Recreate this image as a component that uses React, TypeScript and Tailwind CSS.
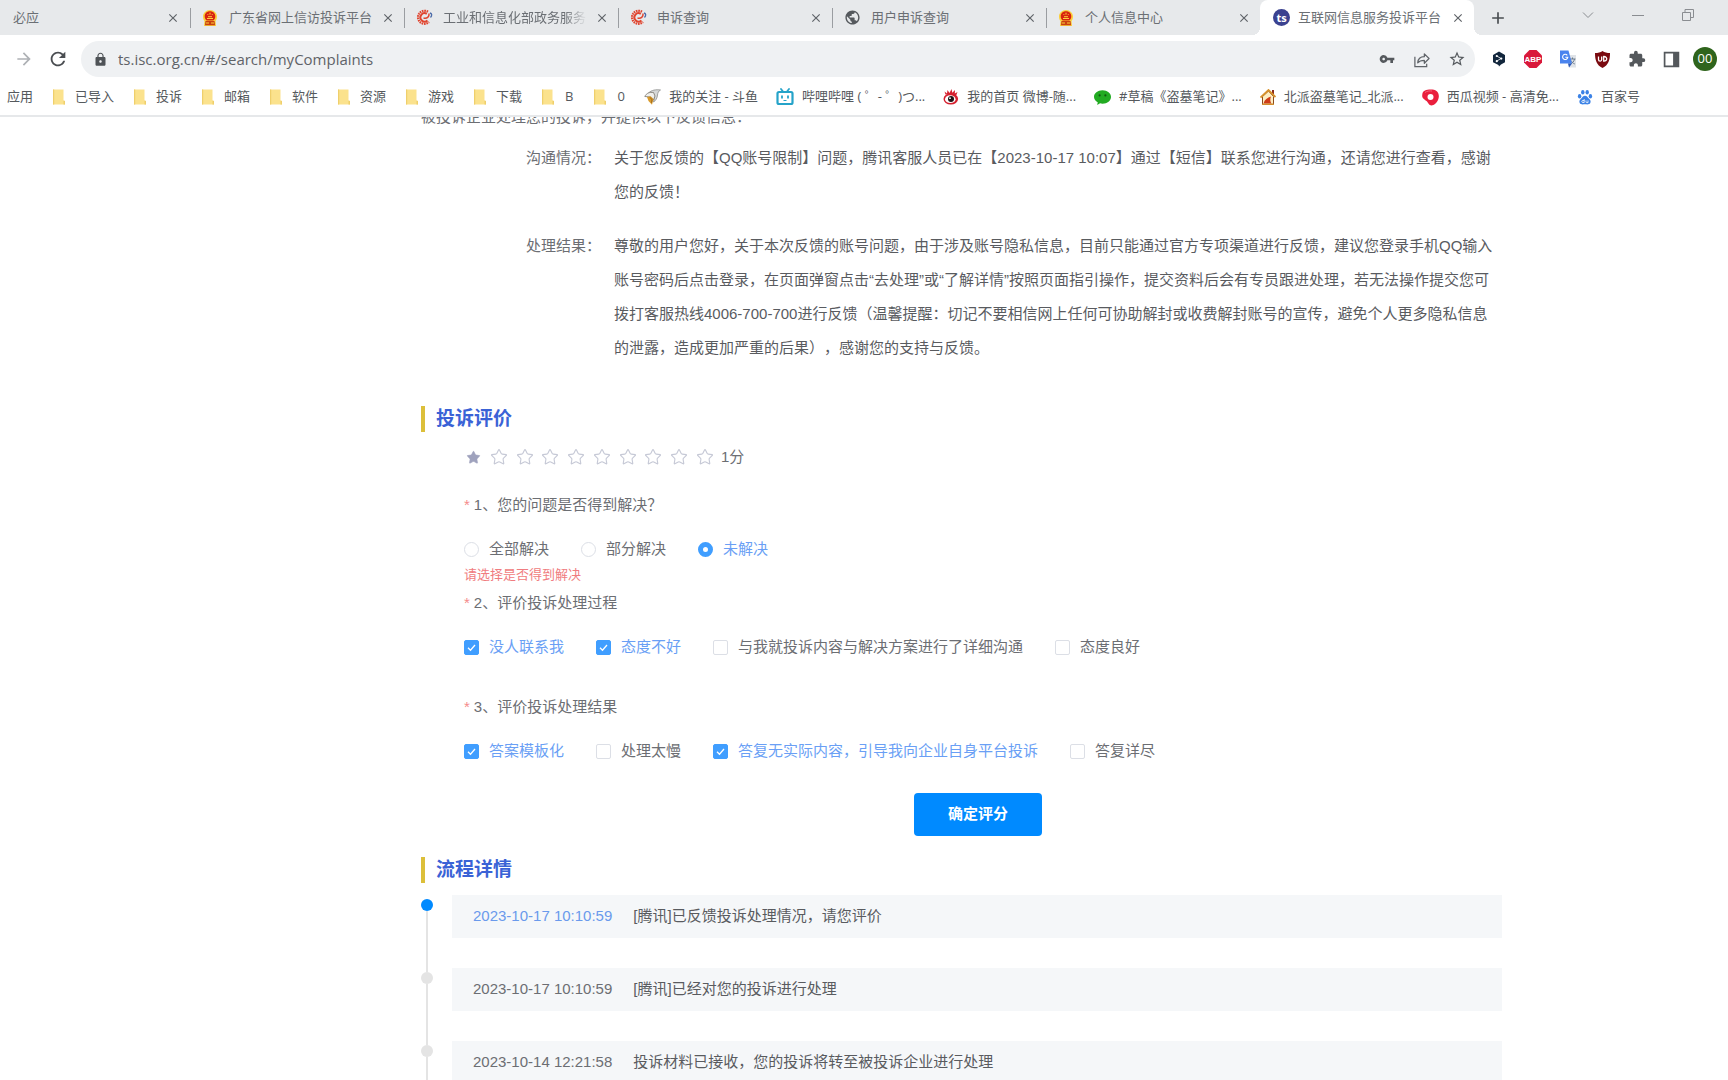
import React, { useState } from 'react';
import { Star } from 'lucide-react';
import {
  MdAdd,
  MdArrowForward,
  MdClose,
  MdExtension,
  MdLock,
  MdPublic,
  MdRefresh,
  MdStarBorder,
  MdVpnKey,
} from 'react-icons/md';

const EmblemIcon = () => (
  <svg className="size-4" viewBox="0 0 16 16">
    <path d="M8 0c4 0 7 3 7 6.500 0 2-.7 3.500-1.500 4.500l.5 5H2l.5-5C1.700 10 1 8.500 1 6.500 1 3 4 0 8 0z" fill="#fbcf3a" />
    <path d="M8 1.300c3.200 0 5.300 2.200 5.300 5 0 2-.8 3.400-2 4.200H4.700c-1.200-.8-2-2.200-2-4.200 0-2.800 2.100-5 5.300-5z" fill="#d8230f" />
    <path d="M3.500 11h9l.5 4.300H3z" fill="#c9400f" />
    <path d="M5 8.500h6M6 6.700h4M8 2.700v2M5.500 4.500h.8M9.800 4.500h.8M4 13h3M9 13h3" stroke="#fbcf3a" strokeWidth="1" />
  </svg>
);

const MiitIcon = () => (
  <svg className="size-[17px]" viewBox="0 0 17 17" fill="none">
    <path d="M12 2.800A6.500 6.500 0 1 0 13 13" stroke="#e0452f" strokeWidth="2.200" strokeDasharray="1.600 .7" />
    <path d="M10.800 4.800A4.200 4.200 0 1 0 11.500 11.500" stroke="#e0452f" strokeWidth="2" />
    <path d="M7.500 9c3.500.8 6-1 5.500-4.500" stroke="#e0452f" strokeWidth="1.500" />
    <path d="M14 4c2 .5 2.300 2.500.5 4.500" stroke="#4a6aa8" strokeWidth="1.300" />
  </svg>
);

const TsIcon = () => (
  <span className="flex size-[17px] items-center justify-center rounded-full bg-[#3b4290] text-[11px] leading-none font-bold text-white">
    ts
  </span>
);

const FolderIcon = () => (
  <svg className="size-4" viewBox="0 0 16 16">
    <path d="M2 .5h10.500v11l1.500.5v3.500H2z" fill="#fbe28d" />
    <path d="M2 .5h1.200v15H2zM12.500 11.500l1.500.5v3.500h-1.500z" fill="#efcf6c" />
  </svg>
);

const DouyuIcon = () => (
  <svg className="size-[17px]" viewBox="0 0 17 17">
    <path d="M4.500 4C7.500 1 12 .3 16.500 1c-2 1-2.700 2.500-3 5-.3 3-1.500 5.500-4 7l1-6z" fill="#d6d8d8" stroke="#8b8d8c" strokeWidth=".8" />
    <path d="M.8 7.500C2.500 4 5.500 3 9.500 3.500L11 7l-1.500 4-3-3z" fill="#efefec" stroke="#77736c" strokeWidth=".8" />
    <path d="M3 8l3.500-.8L9.500 10 8 15.800 4.500 12z" fill="#d99a2b" />
    <path d="M6 8.300l2 2.500-.5 3" stroke="#8a5a1a" strokeWidth=".8" fill="none" />
  </svg>
);

const BilibiliIcon = () => (
  <svg className="size-[18px]" viewBox="0 0 18 18" fill="none" stroke="#25a3c9">
    <path d="M5 1l2 2.500M13 1l-2 2.500" strokeWidth="1.800" strokeLinecap="round" />
    <rect x="1.500" y="4" width="15" height="12" rx="1.500" strokeWidth="2.200" />
    <path d="M6 7.500v3M12 7.500v3" strokeWidth="1.800" />
    <path d="M7.500 12.500h3" strokeWidth="1" />
  </svg>
);

const WeiboIcon = () => (
  <svg className="size-4" viewBox="0 0 16 16">
    <path d="M2.500 5.500L1.500 2.500l2.500 2L4.500 1l2 3L8.500 0l.8 3.700L12 1l-.2 3.500L14.500 3l-1.300 3.500z" fill="#d5202f" />
    <ellipse cx="7.800" cy="10" rx="7.300" ry="5.500" fill="#d5202f" />
    <ellipse cx="7.300" cy="10.200" rx="5.300" ry="3.900" fill="#fff" />
    <circle cx="8" cy="10" r="3" fill="#1d1416" />
    <circle cx="7" cy="9.200" r=".9" fill="#fff" />
  </svg>
);

const WechatIcon = () => (
  <svg className="size-[17px]" viewBox="0 0 16 16">
    <path d="M8 1.200c4.600 0 8 2.800 8 6.300s-3.400 6.300-8 6.300c-.8 0-1.600-.1-2.300-.3L3 15l.5-2.500C1.400 11.300 0 9.500 0 7.500c0-3.500 3.400-6.300 8-6.300z" fill="#22ab22" />
    <circle cx="5.300" cy="6" r="1" fill="#10570f" />
    <circle cx="10.700" cy="6" r="1" fill="#10570f" />
  </svg>
);

const HouseIcon = () => (
  <svg className="size-4" viewBox="0 0 16 16">
    <path d="M12 1h2v4h-2z" fill="#8b2b1d" />
    <path d="M2.500 7.500v7.800h11V7.500L8.500 2z" fill="#fdeec2" stroke="#8c4a1b" strokeWidth="1" />
    <path d="M.5 8.500L8.500 1l7 7" stroke="#d7922c" strokeWidth="1.800" fill="none" />
    <path d="M3.500 14.500c1-4 4-6 7.500-7-1 2.500-1 5 .5 7z" fill="#cf3c17" />
    <path d="M2 15.300h12" stroke="#d7922c" strokeWidth="1.200" />
  </svg>
);

const XiguaIcon = () => (
  <svg className="size-[17px]" viewBox="0 0 17 17">
    <path d="M3 1.500C6 .2 12 0 14.500 2c2.500 2 3 6 1.500 9-1.200 2.700-4 5.500-6.500 5.500S6 13.500 4.500 12C2.500 10.500 0 9.500.2 6.500.3 4 1 2.300 3 1.500z" fill="#ea1f3d" />
    <circle cx="8.500" cy="8" r="3" fill="#fff" />
    <path d="M3 3.500C5 2 8 1.700 10 2" stroke="#f4647a" strokeWidth="1" fill="none" />
  </svg>
);

const BaiduIcon = () => (
  <svg className="size-4" viewBox="0 0 16 16" fill="#3b82e6">
    <ellipse cx="2.600" cy="7.200" rx="1.700" ry="2.200" />
    <ellipse cx="5.800" cy="3.200" rx="1.700" ry="2.300" />
    <ellipse cx="10.200" cy="3.200" rx="1.700" ry="2.300" />
    <ellipse cx="13.400" cy="7.200" rx="1.700" ry="2.200" />
    <path d="M8 6.800c2 0 2.700 1.800 4 3 1.600 1.400 2 2.700 1.300 4.200-.8 1.600-3 1.500-5.300 1.200-2.300.3-4.500.4-5.300-1.200-.7-1.500-.3-2.800 1.300-4.200 1.300-1.200 2-3 4-3z" />
    <path d="M7.200 10v3.500H5.800a1 1 0 0 1 0-2h1.400M9 11.500v1.300q0 .8.800.8H11v-2.200" fill="none" stroke="#fff" strokeWidth=".8" />
  </svg>
);

const ShareIcon = () => (
  <svg className="size-[17px]" viewBox="0 0 18 18" fill="none" stroke="#5f6368" strokeWidth="1.300">
    <path d="M2 6v10.500h12.500V13.500" />
    <path d="M5 12.500c.3-4.500 3-6.500 7-6.500V3l5 5-5 5v-3c-3 0-5.300.5-7 2.500z" strokeLinejoin="round" />
  </svg>
);

const DeeplIcon = () => (
  <svg className="size-4" viewBox="0 0 16 16">
    <path d="M8 .5l6 3.400v7.400l-4 2.300-2 2-.5-1.600L2 11.300V3.900z" fill="#12263c" />
    <path d="M5.800 5l4.200 2.500-4.200 2.600" stroke="#fff" strokeWidth=".8" fill="none" />
    <circle cx="5.800" cy="5" r="1.100" fill="#fff" />
    <circle cx="10.300" cy="7.600" r="1.100" fill="#fff" />
    <circle cx="5.800" cy="10.200" r="1.100" fill="#fff" />
  </svg>
);

const AbpIcon = () => (
  <svg className="size-[18px]" viewBox="0 0 18 18">
    <path d="M5.500 0h7L18 5.500v7L12.500 18h-7L0 12.500v-7z" fill="#d9183b" />
    <text x="9" y="12" textAnchor="middle" fontSize="8" fontWeight="700" fill="#fff" fontFamily="Liberation Sans, sans-serif">
      ABP
    </text>
  </svg>
);

const TranslateIcon = () => (
  <svg className="size-[18px]" viewBox="0 0 18 18">
    <path d="M8 5h9v12.500H10z" fill="#dfe3e8" />
    <path d="M10.500 9h6M13.500 7.500V9M15.500 9c-.5 2.500-2 4-4 5M12 10.500c.8 1.500 2 2.800 3.800 3.500" stroke="#6b7a8c" strokeWidth="1" fill="none" />
    <path d="M1 .5h8.500L13 13.500H1z" fill="#4a83ee" />
    <path d="M10 17.500l-1-4h4z" fill="#2c58b8" />
    <path d="M8.300 5.300A2.600 2.600 0 1 0 8.800 7.300H6.300" stroke="#fff" strokeWidth="1.100" fill="none" />
  </svg>
);

const UblockIcon = () => (
  <svg className="size-[17px]" viewBox="0 0 17 17">
    <path d="M8.500 0c2 1.500 4.500 2 7.500 2 0 7-1.500 12-7.500 15C2.500 14 1 9 1 2c3 0 5.500-.5 7.500-2z" fill="#7a0a10" />
    <path d="M4.500 5.500v3a1.600 1.600 0 0 0 3.200 0v-3M9.700 5.500v4.600c4 .3 4-4.800 0-4.600z" stroke="#fff" strokeWidth="1.300" fill="none" />
  </svg>
);

const SidePanelIcon = () => (
  <svg className="size-[17px]" viewBox="0 0 16 16">
    <path d="M1.500 1.500h13v13h-13z" fill="none" stroke="#54585c" strokeWidth="1.600" />
    <path d="M9.500 1h5v14h-5z" fill="#54585c" />
  </svg>
);

interface LinkInfo {
  title: string;
  icon: React.ReactNode;
  faded?: boolean;
}

const TABS: LinkInfo[] = [
  { title: '广东省网上信访投诉平台', icon: <EmblemIcon /> },
  { title: '工业和信息化部政务服务', icon: <MiitIcon />, faded: true },
  { title: '申诉查询', icon: <MiitIcon /> },
  { title: '用户申诉查询', icon: <MdPublic className="size-[17px] text-[#55595d]" /> },
  { title: '个人信息中心', icon: <EmblemIcon /> },
];

const FOLDERS = ['已导入', '投诉', '邮箱', '软件', '资源', '游戏', '下载', 'B', '0'];

const BOOKMARKS: LinkInfo[] = [
  { title: '我的关注 - 斗鱼', icon: <DouyuIcon /> },
  { title: '哔哩哔哩 ( ゜- ゜)つ...', icon: <BilibiliIcon /> },
  { title: '我的首页 微博-随...', icon: <WeiboIcon /> },
  { title: '#草稿《盗墓笔记》...', icon: <WechatIcon /> },
  { title: '北派盗墓笔记_北派...', icon: <HouseIcon /> },
  { title: '西瓜视频 - 高清免...', icon: <XiguaIcon /> },
  { title: '百家号', icon: <BaiduIcon /> },
];

const CloseButton = () => (
  <button aria-label="关闭" className="shrink-0 text-[#5f6368]">
    <MdClose className="size-[14px]" />
  </button>
);

const BrowserHeader = () => (
  <header className="sticky top-0 z-10 border-b-2 border-[#e6e8ea] bg-white font-[Open_Sans,'Noto_Sans_CJK_SC',sans-serif] text-[13px] text-[#6b6f74]">
    {/* Tab strip */}
    <div className="flex h-[35px] items-stretch bg-[#e7e9eb]">
      <div className="flex w-[190px] items-center justify-between pr-[10px] pl-[13px]">
        <span>必应</span>
        <CloseButton />
      </div>
      {TABS.map((tab) => (
        <div key={tab.title} className="flex w-[214px] items-center gap-2">
          <span className="h-5 w-px bg-[#9a9da1]" />
          <span className="flex w-[22px] shrink-0 items-center justify-center">{tab.icon}</span>
          <span
            className={`flex-1 whitespace-nowrap ${
              tab.faded ? '[mask-image:linear-gradient(to_right,#000_85%,transparent)]' : ''
            }`}
          >
            {tab.title}
          </span>
          <span className="flex pr-[9px]">
            <CloseButton />
          </span>
        </div>
      ))}
      <div className="relative flex w-[214px] items-center gap-2 rounded-t-lg bg-white pr-[9px] pl-[13px]">
        <span className="absolute bottom-0 -left-2 size-2 bg-[radial-gradient(circle_at_0_0,transparent_8px,#fff_8px)]" />
        <span className="absolute -right-2 bottom-0 size-2 bg-[radial-gradient(circle_at_100%_0,transparent_8px,#fff_8px)]" />
        <TsIcon />
        <span className="flex-1 whitespace-nowrap">互联网信息服务投诉平台</span>
        <CloseButton />
      </div>
      <button aria-label="新标签页" className="ml-[14px]">
        <MdAdd className="size-5 text-[#4a4d51]" />
      </button>
      <div className="ml-auto flex items-center gap-[38px] pr-[34px] pb-[6px]">
        <button aria-label="搜索标签页">
          <svg className="size-3" viewBox="0 0 12 12" fill="none" stroke="#8a8d91">
            <path d="M1 3.500l5 5 5-5" />
          </svg>
        </button>
        <button aria-label="最小化">
          <svg className="size-3" viewBox="0 0 12 12" stroke="#8a8d91">
            <path d="M0 6.500h12" />
          </svg>
        </button>
        <button aria-label="还原">
          <svg className="size-3" viewBox="0 0 12 12" fill="none" stroke="#8a8d91">
            <path d="M.5 3.500h8v8h-8zM3 3V.5h8.500v8H9" />
          </svg>
        </button>
      </div>
    </div>

    {/* Toolbar */}
    <div className="flex h-12 items-center pr-[11px] pl-[14px]">
      <button aria-label="前进" className="text-[#aeb1b5]">
        <MdArrowForward className="size-5" />
      </button>
      <button aria-label="重新加载" className="ml-[13px] text-[#4a4d51]">
        <MdRefresh className="size-[22px]" />
      </button>
      <div className="ml-3 flex h-9 flex-1 items-center rounded-full bg-[#eff1f3] pr-[9px] pl-3">
        <MdLock className="size-[15px] text-[#4f5357]" />
        <input
          aria-label="地址"
          defaultValue="ts.isc.org.cn/#/search/myComplaints"
          className="ml-[10px] min-w-0 flex-1 bg-transparent text-[15px] text-[#5f6368] outline-none"
        />
        <div className="flex items-center gap-[18px] text-[#55595d]">
          <MdVpnKey className="size-4" />
          <ShareIcon />
          <MdStarBorder className="size-[18px]" />
        </div>
      </div>
      <div className="ml-4 flex items-center gap-[17px]">
        <DeeplIcon />
        <AbpIcon />
        <TranslateIcon />
        <UblockIcon />
        <MdExtension className="size-[18px] text-[#54585c]" />
        <SidePanelIcon />
        <span className="-ml-1 flex size-6 items-center justify-center rounded-full bg-[#2f641c] text-[13px] text-white">
          00
        </span>
      </div>
    </div>

    {/* Bookmarks */}
    <nav className="flex h-8 items-center gap-[18px] overflow-hidden pb-1 pl-[7px] whitespace-nowrap text-[#55595d]">
      <a href="#apps">应用</a>
      {FOLDERS.map((name) => (
        <a key={name} href="#folder" className="flex items-center gap-2">
          <FolderIcon />
          <span className="min-w-[10px] text-center">{name}</span>
        </a>
      ))}
      {BOOKMARKS.map((item) => (
        <a key={item.title} href="#bookmark" className="flex items-center gap-2">
          {item.icon}
          {item.title}
        </a>
      ))}
    </nav>
  </header>
);

const SectionTitle = ({ children }: { children: React.ReactNode }) => (
  <h2 className="flex h-[26px] items-center gap-[11px] text-[19px] font-bold text-[#3a62d6]">
    <span className="h-full w-1 bg-[#dcbf3a]" />
    {children}
  </h2>
);

const Question = ({ children }: { children: React.ReactNode }) => (
  <legend className="mb-5 flex h-6 items-center gap-1">
    <span className="text-[#f58a8a]">*</span>
    {children}
  </legend>
);

interface CheckGroupProps {
  options: string[];
  checked: string[];
  onToggle: (option: string) => void;
}

const CheckGroup = ({ options, checked, onToggle }: CheckGroupProps) => (
  <div className="flex h-6 items-center gap-8">
    {options.map((option) => (
      <label
        key={option}
        className={`flex items-center gap-[10px] ${checked.includes(option) ? 'text-[#6a9ff5]' : ''}`}
      >
        <span className="grid size-[15px]">
          <input
            type="checkbox"
            checked={checked.includes(option)}
            onChange={() => onToggle(option)}
            className="col-start-1 row-start-1 size-[15px] appearance-none rounded-xs border border-[#dcdfe6] bg-white checked:border-[#409eff] checked:bg-[#409eff]"
          />
          <svg className="pointer-events-none col-start-1 row-start-1 size-[15px]" viewBox="0 0 15 15" fill="none" stroke="#fff" strokeWidth="1.300">
            <path d="M4 7.700l2.500 2.500L11 5" />
          </svg>
        </span>
        {option}
      </label>
    ))}
  </div>
);

const SOLVED_OPTIONS = ['全部解决', '部分解决', '未解决'];
const PROCESS_OPTIONS = ['没人联系我', '态度不好', '与我就投诉内容与解决方案进行了详细沟通', '态度良好'];
const RESULT_OPTIONS = ['答案模板化', '处理太慢', '答复无实际内容，引导我向企业自身平台投诉', '答复详尽'];

const FEEDBACK = [
  {
    label: '沟通情况：',
    text: '关于您反馈的【QQ账号限制】问题，腾讯客服人员已在【2023-10-17 10:07】通过【短信】联系您进行沟通，还请您进行查看，感谢您的反馈！',
  },
  {
    label: '处理结果：',
    text: '尊敬的用户您好，关于本次反馈的账号问题，由于涉及账号隐私信息，目前只能通过官方专项渠道进行反馈，建议您登录手机QQ输入账号密码后点击登录，在页面弹窗点击“去处理”或“了解详情”按照页面指引操作，提交资料后会有专员跟进处理，若无法操作提交您可拨打客服热线4006-700-700进行反馈（温馨提醒：切记不要相信网上任何可协助解封或收费解封账号的宣传，避免个人更多隐私信息的泄露，造成更加严重的后果），感谢您的支持与反馈。',
  },
];

const STEPS = [
  { time: '2023-10-17 10:10:59', text: '[腾讯]已反馈投诉处理情况，请您评价' },
  { time: '2023-10-17 10:10:59', text: '[腾讯]已经对您的投诉进行处理' },
  { time: '2023-10-14 12:21:58', text: '投诉材料已接收，您的投诉将转至被投诉企业进行处理' },
];

function toggle(list: string[], item: string): string[] {
  return list.includes(item) ? list.filter((i) => i !== item) : [...list, item];
}

const ReviewForm = () => {
  const [score, setScore] = useState(1);
  const [solved, setSolved] = useState('未解决');
  const [process, setProcess] = useState(['没人联系我', '态度不好']);
  const [result, setResult] = useState(['答案模板化', '答复无实际内容，引导我向企业自身平台投诉']);

  return (
    <form className="pr-[10px] pl-[43px]" onSubmit={(e) => e.preventDefault()}>
      <div className="mt-[15px] flex h-5 items-center gap-[7px]">
        <div className="flex w-[250px] justify-between">
          {Array.from({ length: 10 }, (_, i) => (
            <button
              key={i}
              type="button"
              aria-label={`${i + 1}分`}
              onClick={() => setScore(i + 1)}
              className="flex size-[18px] items-center justify-center"
            >
              {i < score ? (
                <Star className="size-[15px] fill-[#9fa2bd] text-[#9fa2bd]" strokeWidth={1} />
              ) : (
                <Star className="size-[18px] text-[#c6c9d6]" strokeWidth={1.5} />
              )}
            </button>
          ))}
        </div>
        <span>{score}分</span>
      </div>

      <fieldset className="mt-[26px]">
        <Question>1、您的问题是否得到解决？</Question>
        <div className="flex h-6 items-center gap-8">
          {SOLVED_OPTIONS.map((option) => (
            <label
              key={option}
              className={`flex items-center gap-[10px] ${solved === option ? 'text-[#6a9ff5]' : ''}`}
            >
              <input
                type="radio"
                name="solved"
                checked={solved === option}
                onChange={() => setSolved(option)}
                className="size-[15px] appearance-none rounded-full border border-[#dcdfe6] bg-white checked:border-5 checked:border-[#409eff]"
              />
              {option}
            </label>
          ))}
        </div>
        <p className="mt-1 h-5 text-[13px] leading-5 text-[#f07c80]">请选择是否得到解决</p>
      </fieldset>

      <fieldset className="mt-[6px]">
        <Question>2、评价投诉处理过程</Question>
        <CheckGroup options={PROCESS_OPTIONS} checked={process} onToggle={(o) => setProcess(toggle(process, o))} />
      </fieldset>

      <fieldset className="mt-9">
        <Question>3、评价投诉处理结果</Question>
        <CheckGroup options={RESULT_OPTIONS} checked={result} onToggle={(o) => setResult(toggle(result, o))} />
      </fieldset>

      <button type="submit" className="mx-auto mt-[30px] block h-[43px] w-32 rounded-sm bg-[#008aff] font-bold text-white">
        确定评分
      </button>
    </form>
  );
};

export default function App() {
  return (
    <div className="h-screen overflow-hidden bg-white">
      <BrowserHeader />
      {/* The page is scrolled, its first line sits half under the toolbar */}
      <main className="-mt-[17px] pr-[226px] pl-[421px] font-['Liberation_Sans','Noto_Sans_CJK_SC',sans-serif] text-[15px] text-[#6c6e73] [text-spacing-trim:space-all]">
        <p className="leading-[34px]">被投诉企业处理您的投诉，并提供以下反馈信息：</p>

        <dl className="mt-[7px] flex flex-col gap-5 pl-[105px] leading-[34px]">
          {FEEDBACK.map((item) => (
            <div key={item.label} className="flex">
              <dt className="w-[88px] shrink-0">{item.label}</dt>
              <dd className="text-[#595b5f]">{item.text}</dd>
            </div>
          ))}
        </dl>

        <section className="mt-[41px]">
          <SectionTitle>投诉评价</SectionTitle>
          <ReviewForm />
        </section>

        <section className="mt-[21px]">
          <SectionTitle>流程详情</SectionTitle>
          <ol className="mt-3">
            {STEPS.map((step, i) => (
              <li key={step.text} className="flex gap-[19px]">
                <div className="flex w-3 flex-col items-center">
                  <span className={`h-1 w-0.5 ${i === 0 ? '' : 'bg-[#e4e4e4]'}`} />
                  <span className={`size-3 rounded-full ${i === 0 ? 'bg-[#008aff]' : 'bg-[#e4e4e4]'}`} />
                  <span className="w-0.5 flex-1 bg-[#e4e4e4]" />
                </div>
                <div className="flex-1 pb-[30px]">
                  <div className="flex h-[43px] items-center gap-[21px] bg-[#f5f7f9] pl-[21px]">
                    <time className={i === 0 ? 'text-[#6a9aec]' : ''}>{step.time}</time>
                    <span className="text-[#595b5f]">{step.text}</span>
                  </div>
                </div>
              </li>
            ))}
          </ol>
        </section>
      </main>
    </div>
  );
}
